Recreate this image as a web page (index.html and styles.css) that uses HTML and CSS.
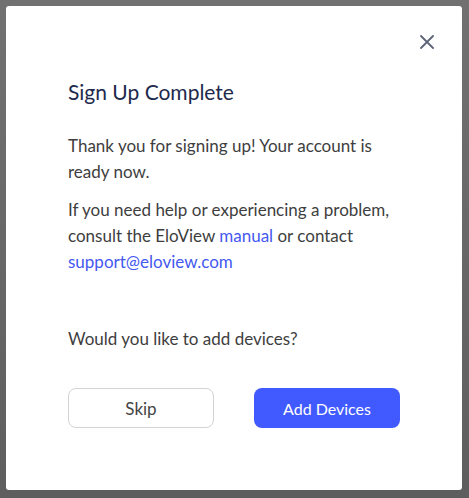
FILE: index.html
```html
<!DOCTYPE html>
<html>
<head>
<meta charset="utf-8">
<link rel="stylesheet" href="styles.css">
</head>
<body>
<div class="modal">
  <div class="top">
    <button class="close" aria-label="Close">
      <svg width="14" height="14" viewBox="0 0 14 14"><path d="M1 1L13 13M13 1L1 13" stroke="#5d6478" stroke-width="1.8" stroke-linecap="round"/></svg>
    </button>
  </div>
  <h1 class="title">Sign Up Complete</h1>
  <p class="text">Thank you for signing up! Your account is ready now.</p>
  <p class="text">If you need help or experiencing a problem, consult the EloView <a href="#">manual</a> or contact <a href="#">support@eloview.com</a></p>
  <p class="text question">Would you like to add devices?</p>
  <div class="actions">
    <button class="btn skip">Skip</button>
    <button class="btn primary">Add Devices</button>
  </div>
</div>
</body>
</html>
```
FILE: styles.css
```css
html, body {
  margin: 0;
  padding: 0;
}
body {
  width: 469px;
  height: 498px;
  background: linear-gradient(#717171, #5e5e5e);
  font-family: Lato, "Open Sans", sans-serif;
  overflow: hidden;
}
.modal {
  margin: 6px;
  width: 456px;
  height: 484px;
  box-sizing: border-box;
  background: #fff;
  border-radius: 3px;
  padding: 0 62px;
}
.top {
  display: flex;
  justify-content: flex-end;
  padding-top: 24px;
  margin-right: -39px;
}
.close {
  border: 0;
  background: none;
  padding: 5px;
  width: 24px;
  height: 24px;
  display: flex;
  align-items: center;
  justify-content: center;
  cursor: pointer;
}
.title {
  margin: 24px 0 0;
  font-size: 21px;
  font-weight: 400;
  line-height: 28px;
  color: #1e2a4c;
}
.text {
  margin: 0;
  font-size: 17px;
  line-height: 26px;
  color: #3e3e3e;
}
.title + .text {
  margin-top: 27px;
}
.text + .text {
  margin-top: 12px;
}
.text + .question {
  margin-top: 51px;
}
.text a {
  color: #4459f0;
  text-decoration: none;
}
.actions {
  display: flex;
  justify-content: space-between;
  margin-top: 36px;
}
.btn {
  width: 146px;
  height: 40px;
  border-radius: 8px;
  font-family: Lato, "Open Sans", sans-serif;
  font-size: 16px;
  cursor: pointer;
}
.skip {
  background: #fff;
  border: 1px solid #d3d3d3;
  color: #444;
  font-size: 17px;
}
.primary {
  background: #415aff;
  border: 0;
  color: #fff;
}
```
